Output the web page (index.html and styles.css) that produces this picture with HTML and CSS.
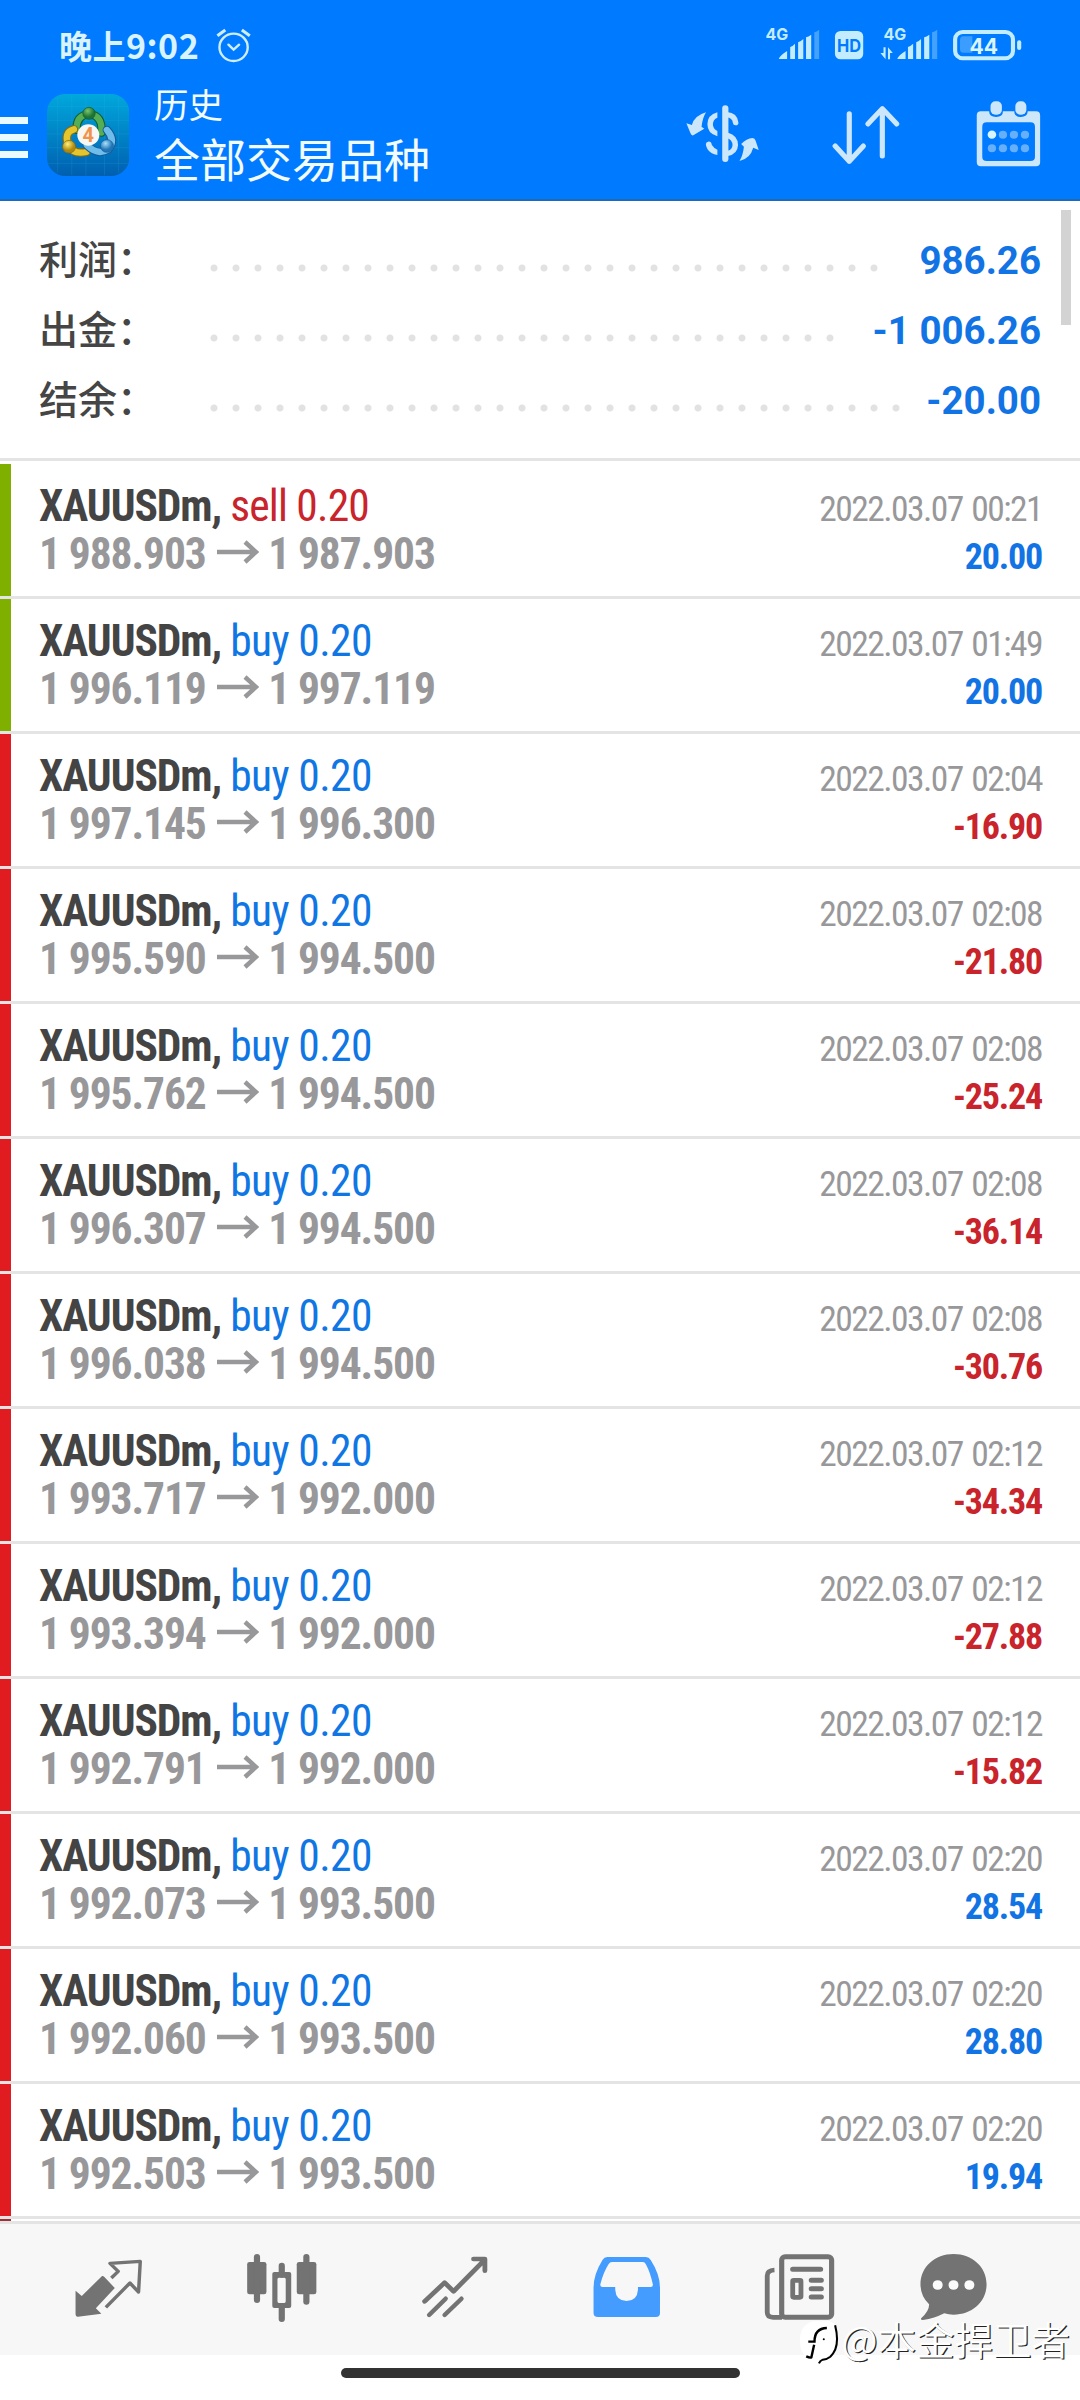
FILE: index.html
```html
<!DOCTYPE html>
<html lang="zh-CN">
<head>
<meta charset="utf-8">
<title>历史</title>
<link rel="stylesheet" href="styles.css">
</head>
<body>
<div class="screen">
  <header class="header">
    <div class="status">
      <span class="status-time"><span class="status-part">晚上</span>9:02</span>
      <svg class="alarm" viewBox="625 80 108 110" preserveAspectRatio="none" fill="none" stroke="#cdeeff" stroke-width="7" stroke-linecap="round"><circle cx="679" cy="141" r="41"/><path d="M664 133l15 15 16-15"/><path d="M632 106l23-17M703 89l23 17" stroke-width="9" stroke-linecap="butt"/></svg>
      <svg class="signals" viewBox="650 54 760 130" preserveAspectRatio="none" fill="#c3edff">
        <text class="net" x="657" y="119" textLength="66" lengthAdjust="spacingAndGlyphs">4G</text>
        <path d="M696 177q2-10 24-24v24zM729 177v-36q7-2 14-10v46zM752 177v-50q7-2 15-10v60zM775 177v-65q7-2 15-8v73z"/><path d="M799 177V97q7-2 14-8v88z" opacity=".35"/>
        <rect x="859" y="93" width="82" height="85" rx="16"/>
        <text class="hd" x="865" y="156" textLength="70" lengthAdjust="spacingAndGlyphs">HD</text>
        <text class="net" x="1000" y="119" textLength="66" lengthAdjust="spacingAndGlyphs">4G</text>
        <path d="M1000 142h6v36l-15-19h9zM1013 178v-36l14 17h-8v19z"/>
        <path d="M1040 177q2-10 24-24v24zM1071 177v-36q7-2 15-10v46zM1095 177v-50q7-2 14-10v60zM1118 177v-65q7-2 15-8v73z"/><path d="M1141 177V97q7-2 15-8v88z" opacity=".35"/>
        <path d="M1232 109h26v49h-26q-10 0-10-12v-25q0-12 10-12z" opacity=".3"/>
        <rect x="1208" y="96" width="168" height="79" rx="22" fill="none" stroke="#c3edff" stroke-width="12"/>
        <rect x="1388" y="121" width="12" height="29" rx="6"/>
        <text class="battery" x="1250" y="162" textLength="83" lengthAdjust="spacingAndGlyphs">44</text>
      </svg>
    </div>
    <div class="toolbar">
      <div class="menu"><i></i><i></i><i></i></div>
      <svg class="logo" viewBox="136 282 239 246" preserveAspectRatio="none">
        <defs>
          <linearGradient id="tile" x1="0" y1="0" x2="0" y2="1"><stop offset="0" stop-color="#00a8dc"/><stop offset=".5" stop-color="#0083c6"/><stop offset="1" stop-color="#005fb0"/></linearGradient>
          <radialGradient id="green" cx=".4" cy=".3"><stop offset="0" stop-color="#7cc56c"/><stop offset="1" stop-color="#1d7434"/></radialGradient>
          <radialGradient id="gold" cx=".4" cy=".3"><stop offset="0" stop-color="#fff07a"/><stop offset="1" stop-color="#b08a10"/></radialGradient>
          <radialGradient id="blue" cx=".4" cy=".3"><stop offset="0" stop-color="#a8e0fa"/><stop offset="1" stop-color="#2276b8"/></radialGradient>
        </defs>
        <rect x="136" y="282" width="239" height="246" rx="54" fill="url(#tile)"/>
        <path d="M167 292v226M208 284v242M249 282v246M303 284v242M344 292v226M138 320h235M136 361h239M136 402h239M136 443h239M138 490h235" stroke="#36b3e6" stroke-width="1.5" opacity=".35"/>
        <g stroke-linecap="round" fill="none">
          <path d="M222 390q-2-44 36-48 40 4 36 56" stroke="#155e2c" stroke-width="24"/><path d="M222 390q-2-44 36-48 40 4 36 56" stroke="#54ae55" stroke-width="18"/>
          <path d="M214 388q-30 8-16 48 14 28 52 20" stroke="#8a6a0c" stroke-width="25"/><path d="M214 388q-30 8-16 48 14 28 52 20" stroke="#e3c62e" stroke-width="19"/>
          <path d="M310 390q26 30 4 58-30 20-62-12" stroke="#155b99" stroke-width="25"/><path d="M310 390q26 30 4 58-30 20-62-12" stroke="#6fbdea" stroke-width="19"/>
        </g>
        <circle cx="258" cy="340" r="18" fill="url(#green)" stroke="#155e2c" stroke-width="2"/>
        <circle cx="200" cy="440" r="19" fill="url(#gold)" stroke="#8a6a0c" stroke-width="2"/>
        <circle cx="310" cy="438" r="19" fill="url(#blue)" stroke="#155b99" stroke-width="2"/>
        <circle cx="256" cy="405" r="32" fill="#f9f7f4"/>
        <text class="logo-num" x="239" y="426">4</text>
      </svg>
      <div class="titles"><div class="sub">历史</div><div class="title">全部交易品种</div></div>
      <svg class="act act-swap" viewBox="420 296 220 204" preserveAspectRatio="none">
        <g fill="none" stroke="#cce6fa" stroke-width="16" stroke-linecap="round"><path d="M537 324v152" stroke-width="18"/><path d="M541 343q24 2 26 24"/><path d="M543 405q22 6 23 29-1 22-23 25"/></g>
        <path d="M514 336v16q-13 5-13 20 0 14 13 20v16q-29-8-29-36t29-36zM487 424q9-2 11 10 6 10 16 14v16q-20-3-29-18-10-20 2-22z" fill="#cce6fa"/>
        <path d="M481 336q-10 16-13 43l8 6-32 20q-6 1-8-6l-12-30 16 5q7-28 41-38zM578 482q10-16 13-43l-8-8q16-16 33-18 7 0 9 8l9 28-16-7q-8 32-40 40z" fill="#cce6fa"/>
      </svg>
      <svg class="act act-sort" viewBox="840 296 210 204" preserveAspectRatio="none" fill="none" stroke="#cce6fa" stroke-width="15" stroke-linecap="round" stroke-linejoin="round"><path d="M896 340v143M855 437l41 46 41-46"/><path d="M992 467V325M950 371l42-46 42 46"/></svg>
      <svg class="act act-cal" viewBox="1260 296 200 204" preserveAspectRatio="none" fill="#cce6fa">
        <path fill-rule="evenodd" d="M1280 333h24q0 17 20 17t20-17h33q0 17 19 17t20-17h24q12 0 12 12v141q0 12-12 12h-160q-12 0-12-12v-141q0-12 12-12zM1297 366q-13 0-13 13v90q0 13 13 13h127q13 0 13-13v-90q0-13-13-13z"/>
        <rect x="1308" y="303" width="33" height="40" rx="14"/><rect x="1380" y="303" width="32" height="40" rx="14"/>
        <circle cx="1312" cy="403" r="12.500" fill="#d8f4ff"/>
        <g fill="#66affa"><circle cx="1344" cy="403" r="12"/><circle cx="1376" cy="403" r="12"/><circle cx="1408" cy="403" r="12"/><circle cx="1312" cy="444" r="12"/><circle cx="1344" cy="444" r="12"/><circle cx="1376" cy="444" r="12"/><circle cx="1408" cy="444" r="12"/></g>
      </svg>
    </div>
  </header>

  <main class="content">
    <section class="summary">
      <div class="sum-row"><span class="sum-label">利润：</span><span class="dots" style="width:682px"></span><span class="sum-value">986.26</span></div>
      <div class="sum-row"><span class="sum-label">出金：</span><span class="dots" style="width:638px"></span><span class="sum-value">-1 006.26</span></div>
      <div class="sum-row"><span class="sum-label">结余：</span><span class="dots" style="width:704px"></span><span class="sum-value">-20.00</span></div>
      <div class="scrollbar"></div>
    </section>

    <svg class="defs" width="0" height="0"><symbol id="arrow" viewBox="0 0 42 24" preserveAspectRatio="none"><path d="M0 12h38M28 2l11 10-11 10" fill="none" stroke="#98989a" stroke-width="4.400"/></symbol></svg>

    <section class="deals">
      <article class="deal win"><div class="line"><b class="symbol">XAUUSDm,</b><span class="sell">sell 0.20</span><time>2022.03.07 00:21</time></div><div class="line"><b class="price">1 988.903</b><svg class="arrow"><use href="#arrow"/></svg><b class="price">1 987.903</b><b class="profit up">20.00</b></div></article>
      <article class="deal win"><div class="line"><b class="symbol">XAUUSDm,</b><span class="buy">buy 0.20</span><time>2022.03.07 01:49</time></div><div class="line"><b class="price">1 996.119</b><svg class="arrow"><use href="#arrow"/></svg><b class="price">1 997.119</b><b class="profit up">20.00</b></div></article>
      <article class="deal"><div class="line"><b class="symbol">XAUUSDm,</b><span class="buy">buy 0.20</span><time>2022.03.07 02:04</time></div><div class="line"><b class="price">1 997.145</b><svg class="arrow"><use href="#arrow"/></svg><b class="price">1 996.300</b><b class="profit down">-16.90</b></div></article>
      <article class="deal"><div class="line"><b class="symbol">XAUUSDm,</b><span class="buy">buy 0.20</span><time>2022.03.07 02:08</time></div><div class="line"><b class="price">1 995.590</b><svg class="arrow"><use href="#arrow"/></svg><b class="price">1 994.500</b><b class="profit down">-21.80</b></div></article>
      <article class="deal"><div class="line"><b class="symbol">XAUUSDm,</b><span class="buy">buy 0.20</span><time>2022.03.07 02:08</time></div><div class="line"><b class="price">1 995.762</b><svg class="arrow"><use href="#arrow"/></svg><b class="price">1 994.500</b><b class="profit down">-25.24</b></div></article>
      <article class="deal"><div class="line"><b class="symbol">XAUUSDm,</b><span class="buy">buy 0.20</span><time>2022.03.07 02:08</time></div><div class="line"><b class="price">1 996.307</b><svg class="arrow"><use href="#arrow"/></svg><b class="price">1 994.500</b><b class="profit down">-36.14</b></div></article>
      <article class="deal"><div class="line"><b class="symbol">XAUUSDm,</b><span class="buy">buy 0.20</span><time>2022.03.07 02:08</time></div><div class="line"><b class="price">1 996.038</b><svg class="arrow"><use href="#arrow"/></svg><b class="price">1 994.500</b><b class="profit down">-30.76</b></div></article>
      <article class="deal"><div class="line"><b class="symbol">XAUUSDm,</b><span class="buy">buy 0.20</span><time>2022.03.07 02:12</time></div><div class="line"><b class="price">1 993.717</b><svg class="arrow"><use href="#arrow"/></svg><b class="price">1 992.000</b><b class="profit down">-34.34</b></div></article>
      <article class="deal"><div class="line"><b class="symbol">XAUUSDm,</b><span class="buy">buy 0.20</span><time>2022.03.07 02:12</time></div><div class="line"><b class="price">1 993.394</b><svg class="arrow"><use href="#arrow"/></svg><b class="price">1 992.000</b><b class="profit down">-27.88</b></div></article>
      <article class="deal"><div class="line"><b class="symbol">XAUUSDm,</b><span class="buy">buy 0.20</span><time>2022.03.07 02:12</time></div><div class="line"><b class="price">1 992.791</b><svg class="arrow"><use href="#arrow"/></svg><b class="price">1 992.000</b><b class="profit down">-15.82</b></div></article>
      <article class="deal"><div class="line"><b class="symbol">XAUUSDm,</b><span class="buy">buy 0.20</span><time>2022.03.07 02:20</time></div><div class="line"><b class="price">1 992.073</b><svg class="arrow"><use href="#arrow"/></svg><b class="price">1 993.500</b><b class="profit up">28.54</b></div></article>
      <article class="deal"><div class="line"><b class="symbol">XAUUSDm,</b><span class="buy">buy 0.20</span><time>2022.03.07 02:20</time></div><div class="line"><b class="price">1 992.060</b><svg class="arrow"><use href="#arrow"/></svg><b class="price">1 993.500</b><b class="profit up">28.80</b></div></article>
      <article class="deal"><div class="line"><b class="symbol">XAUUSDm,</b><span class="buy">buy 0.20</span><time>2022.03.07 02:20</time></div><div class="line"><b class="price">1 992.503</b><svg class="arrow"><use href="#arrow"/></svg><b class="price">1 993.500</b><b class="profit up">19.94</b></div></article>
      <div class="next-deal"></div>
    </section>
  </main>

  <nav class="tabs">
    <svg viewBox="200 240 230 225" preserveAspectRatio="none"><path d="M296 318q3-1 6 2l31 34-55 61 16 16-68 9q-7 1-7-7v-71l18 16z" fill="#737373"/><path d="M323 324l20-20-24-24 88-6-5 92-25-27-70 73" fill="none" stroke="#737373" stroke-width="10" stroke-linejoin="round"/></svg>
    <svg viewBox="701 240 230 225" preserveAspectRatio="none" fill="#737373"><rect x="716" y="276" width="56" height="97" rx="7"/><rect x="860" y="276" width="57" height="97" rx="7"/><path d="M744.500 261v129M888 261v134M816.500 287v27M816.500 408v39" stroke="#737373" stroke-width="18" stroke-linecap="round"/><path fill-rule="evenodd" d="M795 306h43q6 0 6 6v96q0 6-6 6h-43q-6 0-6-6v-96q0-6 6-6zM808 323q-4 0-4 5v66q0 5 4 5h16q4 0 4-5v-66q0-5-4-5z"/></svg>
    <svg viewBox="1203 240 230 225" preserveAspectRatio="none" fill="none" stroke="#737373" stroke-width="13" stroke-linecap="round" stroke-linejoin="round"><path d="M1231 394l58-56 26 26 86-90M1373 267h33v35" stroke-width="14"/><path d="M1244 435l48-49M1289 435l49-49"/></svg>
    <svg viewBox="139 240 230 225" preserveAspectRatio="none" fill="#459cff"><path fill-rule="evenodd" d="M198 261h112q9 0 14 9 27 43 27 83v76q0 12-12 12h-168q-13 0-13-12v-76q0-40 26-83 5-9 14-9zM212 276q-7 0-10 6-16 26-24 60-2 9 6 9h37v8q2 33 33 34 31-1 33-34v-8h37q8 0 6-9-7-34-20-59-3-7-9-7z"/></svg>
    <svg viewBox="643 240 230 225" preserveAspectRatio="none" fill="none" stroke="#737373"><rect x="706" y="260" width="145" height="182" rx="10" stroke-width="15"/><path d="M685 300q-21 1-21 17v110q0 15 17 15h26" stroke-width="14"/><path d="M738 298h81M792 331h29M792 356h29M792 381h29" stroke-width="15" stroke-linecap="round"/><rect x="738" y="331" width="24" height="51" rx="3" stroke-width="14"/></svg>
    <svg class="chat" viewBox="1090 240 230 225" preserveAspectRatio="none"><path d="M1199 252c54 0 96 39 96 91s-42 91-96 91q-14 0-27-4-28 15-62 20-8 0-5-5 24-22 23-42-25-25-25-60c0-52 42-91 96-91z" fill="#737373"/><g fill="#fbfbfb"><circle cx="1153" cy="345" r="14.500"/><circle cx="1199" cy="345" r="14.500"/><circle cx="1245" cy="345" r="14.500"/></g></svg>
  </nav>
  <div class="gesture"><i></i></div>

  <div class="watermark">
    <svg viewBox="755 450 118 135" preserveAspectRatio="none"><path d="M795 454h50q23 8 23 46 0 42-30 60l-26 16v-14l-38-4q-16-8-16-50t37-54z" fill="#fff"/><path d="M860 466q16 66-14 94-10 8-22 9-8 3-11 11" fill="none" stroke="#000" stroke-width="6"/><path d="M782 515h18q0-40 36-41M799 524l-8 38q-4 2-15-3" fill="none" stroke="#000" stroke-width="7"/><circle cx="827" cy="508" r="3"/></svg>
    <span>@本金捍卫者</span>
  </div>
</div>
</body>
</html>
```
FILE: styles.css
```css
* { box-sizing: border-box; }
body { margin: 0; background: #fff; font-family: Roboto, "Noto Sans CJK SC", sans-serif; }
svg { display: block; flex: none; }
.screen { position: relative; width: 1080px; height: 2400px; overflow: hidden; display: flex; flex-direction: column; background: #fff; }

.header { height: 201px; background: #007aff; border-bottom: 2px solid #1c6bb4; }
.status { display: flex; height: 84px; padding: 27px 55px 0 59px; }
.status-time { font: 700 34px/36px "Noto Sans CJK SC", sans-serif; letter-spacing: .5px; color: #d9f3ff; white-space: nowrap; }
.status-part { font-size: 33px; }
.alarm { width: 37.200px; height: 36.700px; margin-left: 16px; }
.signals { width: 261.700px; height: 43.300px; margin-left: auto; margin-top: -9px; }
.net { font: 700 48px Inter, sans-serif; }
.hd { font: 700 52px Inter, sans-serif; fill: #007aff; }
.battery { font: 700 66px Inter, sans-serif; fill: #d9f5ff; }

.toolbar { display: flex; align-items: flex-start; padding-right: 37px; height: 115px; }
.menu { display: flex; flex-direction: column; gap: 9.500px; width: 27.500px; margin-top: 33px; }
.menu i { height: 7.300px; background: #ebfaff; }
.logo { width: 82.300px; height: 82px; margin: 10px 0 0 19.300px; }
.logo-num { font: 700 58px Roboto, sans-serif; fill: #f0944d; }
.titles { margin: -1px 0 0 25px; color: #f2fbff; font-family: "Noto Sans CJK SC", sans-serif; white-space: nowrap; }
.sub { font-size: 34.500px; line-height: 40px; }
.title { font-size: 46px; line-height: 50px; margin-top: 9px; }
.act { height: 68px; margin-top: 14.700px; }
.act-swap { width: 75.800px; margin-left: auto; }
.act-sort { width: 72.300px; margin-left: 69px; }
.act-cal { width: 68.900px; margin-left: 72.300px; }

.content { height: 2020px; overflow: hidden; }
.summary { position: relative; height: 260px; padding: 25px 39px 0; border-bottom: 3px solid #e4e4e4; }
.sum-row { display: flex; align-items: center; height: 70px; }
.sum-label { width: 163.500px; padding-bottom: 7px; color: #454545; font: 500 39px/63px "Noto Sans CJK SC", sans-serif; white-space: nowrap; }
.dots { height: 8px; margin-top: 13px; background: radial-gradient(circle at center, #e2e2e2 3px, transparent 4px) 0 0 / 22px 8px; }
.sum-value { margin-left: auto; padding-bottom: 2px; font-size: 38.500px; font-weight: 700; color: #1274e4; }
.scrollbar { position: absolute; right: 9px; top: 9px; width: 10px; height: 115px; background: #d3d3d3; }

.defs { position: absolute; }
.deals { padding-top: 3px; }
.deal { height: 135px; padding: 19px 38px 0 39px; border-bottom: 3px solid #e4e4e4; background: linear-gradient(#e11c21, #e11c21) 0 0 / 11px 100% no-repeat; font-stretch: 75%; }
.deal.win { background-image: linear-gradient(#7fb000, #7fb000); }
.line { display: flex; align-items: baseline; height: 48px; line-height: 48px; font-size: 43.500px; white-space: nowrap; }
.symbol { color: #444; letter-spacing: -1.050px; }
.sell, .buy { margin-left: 9px; letter-spacing: -.600px; }
.sell { color: #c9232b; letter-spacing: -.800px; }
.buy { color: #0f76e4; }
.price { color: #98989a; letter-spacing: -1.100px; }
.arrow { width: 42px; height: 24px; align-self: center; margin: 0 9px 6px 11.500px; }
.line time { margin-left: auto; font-size: 35.500px; letter-spacing: -1.550px; word-spacing: 2px; color: #98989a; }
.profit { margin-left: auto; font-size: 36px; letter-spacing: -1.200px; }
.up { color: #1274e4; }
.down { color: #c9232b; }
.next-deal { width: 11px; height: 2px; background: #9f3136; }

.tabs { display: flex; height: 134px; border-top: 3px solid #e4e4e4; background: #f7f7f7; padding: 26px 0 0 69px; gap: 93.600px; }
.tabs svg { width: 79.200px; height: 75px; }
.tabs .chat { margin-left: -17px; }
.gesture { display: flex; justify-content: center; padding-top: 13px; height: 45px; }
.gesture i { width: 399px; height: 10px; border-radius: 5px; background: #323232; }

.watermark { position: absolute; right: 10px; top: 2311px; display: flex; align-items: center; }
.watermark svg { width: 40.600px; height: 45px; margin: 9px 2px 0 0; }
.watermark span { font: 350 38.500px/45px "Noto Sans CJK SC", sans-serif; color: #fff; text-shadow: 1.200px 1.200px 0 #222; white-space: nowrap; }
```
